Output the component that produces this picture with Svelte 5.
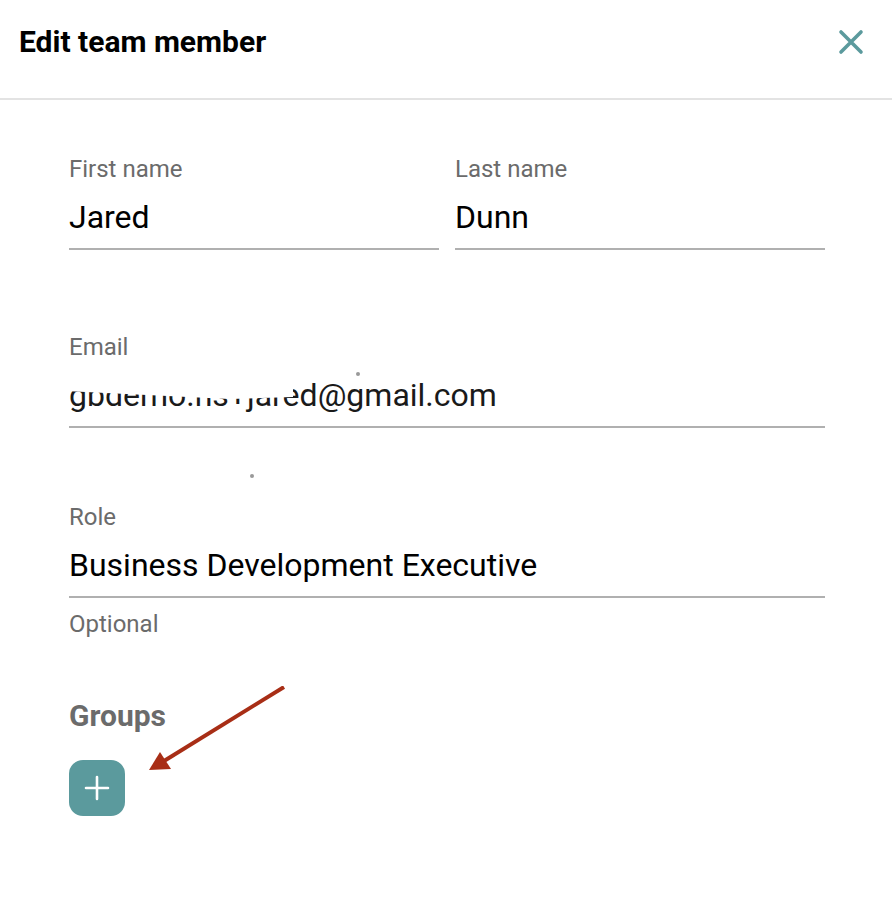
<script>
	let firstName = 'Jared'
	let lastName = 'Dunn'
	let role = 'Business Development Executive'
</script>

<div class="panel">
	<header>
		<h1>Edit team member</h1>
		<button class="close" aria-label="Close">
			<svg width="26" height="26" viewBox="0 0 26 26">
				<path d="M3 3 L23 23 M23 3 L3 23" stroke="#5b9a9d" stroke-width="3.6" stroke-linecap="round" fill="none" />
			</svg>
		</button>
	</header>

	<form>
		<div class="row names">
			<div class="field">
				<span class="label">First name</span>
				<div class="value">{firstName}</div>
			</div>
			<div class="field">
				<span class="label">Last name</span>
				<div class="value">{lastName}</div>
			</div>
		</div>

		<div class="field email">
			<span class="label">Email</span>
			<div class="value">gbdemo.hs+jared@gmail.com</div>
			<i class="mask"></i>
			<i class="speck one"></i>
			<i class="speck two"></i>
		</div>

		<div class="field role">
			<span class="label">Role</span>
			<div class="value">{role}</div>
			<span class="hint">Optional</span>
		</div>

		<h2>Groups</h2>
		<button class="add" type="button" aria-label="Add group">
			<svg width="26" height="26" viewBox="0 0 26 26">
				<path d="M13 2 V24 M2 13 H24" stroke="#fff" stroke-width="2.6" stroke-linecap="round" fill="none" />
			</svg>
		</button>

		<svg class="arrow" width="150" height="100" viewBox="0 0 150 100">
			<line x1="135" y1="1" x2="15" y2="75" stroke="#a82e16" stroke-width="4" />
			<polygon points="0,84 11,66 22,83" fill="#a82e16" />
		</svg>
	</form>
</div>

<style>
	:global(body) {
		margin: 0;
		background: #fff;
	}
	.panel {
		width: 892px;
		height: 918px;
		font-family: Roboto, "Liberation Sans", sans-serif;
	}
	header {
		height: 98px;
		border-bottom: 2px solid #e3e3e3;
		display: flex;
		align-items: flex-start;
		justify-content: space-between;
		padding: 0 28px 0 19px;
	}
	h1 {
		margin: 24px 0 0;
		font-size: 30px;
		line-height: 36px;
		font-weight: 700;
		color: #000;
	}
	.close {
		margin-top: 29px;
		padding: 0;
		border: 0;
		background: none;
		height: 26px;
	}
	form {
		position: relative;
		padding: 55px 67px 0 69px;
	}
	.names {
		display: grid;
		grid-template-columns: 370px 370px;
		gap: 16px;
	}
	.field {
		position: relative;
	}
	.label, .hint {
		display: block;
		font-size: 24px;
		line-height: 28px;
		color: #6b6b6b;
	}
	.value {
		margin-top: 10px;
		font-size: 32px;
		line-height: 48px;
		height: 55px;
		color: #000;
		border-bottom: 2px solid #b0b0b0;
	}
	.email {
		margin-top: 83px;
	}
	.email .value {
		color: #1a1a1a;
	}
	/* white-out over the address, cut at a slight slant */
	.mask {
		position: absolute;
		left: -4px;
		top: 28px;
		width: 228px;
		height: 38px;
		background: #fff;
		clip-path: polygon(0 0, 100% 0, 100% 95%, 72% 100%, 0 79%);
	}
	.speck {
		position: absolute;
		width: 4px;
		height: 4px;
		border-radius: 50%;
		background: #999;
	}
	.speck.one {
		left: 287px;
		top: 39px;
	}
	.speck.two {
		left: 181px;
		top: 141px;
	}
	.role {
		margin-top: 75px;
	}
	.hint {
		margin-top: 12px;
	}
	h2 {
		margin: 60px 0 0;
		font-size: 30px;
		line-height: 36px;
		font-weight: 700;
		color: #6b6b6b;
	}
	.add {
		display: flex;
		align-items: center;
		justify-content: center;
		width: 56px;
		height: 56px;
		margin-top: 26px;
		padding: 0;
		border: 0;
		border-radius: 14px;
		background: #5b9a9d;
	}
	.arrow {
		position: absolute;
		left: 149px;
		top: 586px;
	}
</style>
